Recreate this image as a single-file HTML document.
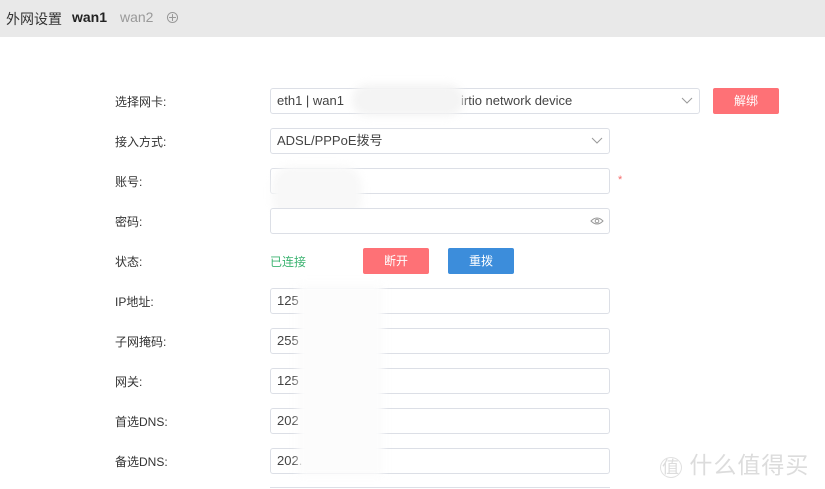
<!DOCTYPE html>
<html style="width:825px;height:489px;overflow:hidden"><head><meta charset="utf-8"><style>
*{margin:0;padding:0;box-sizing:border-box}
body{width:825px;height:489px;overflow:hidden;background:#fff;font-family:"Liberation Sans","Noto Sans CJK SC",sans-serif;font-size:13px;color:#333;position:relative}
.hdr{position:absolute;left:0;top:0;width:825px;height:37px;background:#e9e9e9}
.hdr span{position:absolute;top:9px;font-size:14px}
.lbl{position:absolute;left:115px;font-size:12px;color:#333}
.in{position:absolute;left:270px;width:340px;height:26px;border:1px solid #dcdfe6;border-radius:3px;background:#fff;padding-left:6px;line-height:24px;font-size:13px;color:#444}
.chev{position:absolute;right:6px;top:6px;width:12px;height:10px}
.btn{position:absolute;height:26px;color:#fff;font-size:12px;text-align:center;line-height:26px;border-radius:2px}
.blur{position:absolute;background:#fff;filter:blur(4px)}
</style></head><body>
<div class="hdr">
<span style="left:6px;color:#333">外网设置</span>
<span style="left:72px;font-weight:bold;color:#222">wan1</span>
<span style="left:120px;color:#999">wan2</span>
<span style="left:165px;color:#999;font-size:15px;top:7px">⊕</span>
</div>

<div class="lbl" style="top:93px">选择网卡:</div>
<div class="in" style="top:88px;width:430px">eth1 | wan1<span style="position:absolute;left:190px">irtio network device</span>
<svg class="chev" viewBox="0 0 12 10"><path d="M1 3l5 5 5-5" fill="none" stroke="#999" stroke-width="1"/></svg></div>
<div class="blur" style="left:352px;top:84px;width:112px;height:32px;border-radius:16px;background:#f4f4f4"></div>
<div class="btn" style="left:713px;top:88px;width:66px;background:#fe7176">解绑</div>

<div class="lbl" style="top:133px">接入方式:</div>
<div class="in" style="top:128px">ADSL/PPPoE拨号<svg class="chev" viewBox="0 0 12 10"><path d="M1 3l5 5 5-5" fill="none" stroke="#999" stroke-width="1"/></svg></div>

<div class="lbl" style="top:173px">账号:</div>
<div class="in" style="top:168px"></div>
<div style="position:absolute;left:618px;top:174px;color:#f56c6c;font-size:11px">*</div>
<div class="blur" style="left:272px;top:166px;width:90px;height:54px;border-radius:20px;background:#f8f8f8"></div>

<div class="lbl" style="top:213px">密码:</div>
<div class="in" style="top:208px"><svg style="position:absolute;right:5px;top:7px" width="14" height="10" viewBox="0 0 14 10"><path d="M1 5Q7-1 13 5Q7 11 1 5Z" fill="none" stroke="#999"/><circle cx="7" cy="5" r="1.8" fill="none" stroke="#999"/></svg></div>

<div class="lbl" style="top:253px">状态:</div>
<div style="position:absolute;left:270px;top:253px;color:#3cb371;font-size:12px">已连接</div>
<div class="btn" style="left:363px;top:248px;width:66px;background:#fe7176">断开</div>
<div class="btn" style="left:448px;top:248px;width:66px;background:#3c8ddb">重拨</div>

<div class="lbl" style="top:293px">IP地址:</div>
<div class="in" style="top:288px">125</div>
<div class="lbl" style="top:333px">子网掩码:</div>
<div class="in" style="top:328px">255</div>
<div class="lbl" style="top:373px">网关:</div>
<div class="in" style="top:368px">125</div>
<div class="lbl" style="top:413px">首选DNS:</div>
<div class="in" style="top:408px">202</div>
<div class="lbl" style="top:453px">备选DNS:</div>
<div class="in" style="top:448px">202.</div>
<div style="position:absolute;left:270px;top:487px;width:340px;height:2px;border-top:1px solid #dcdfe6"></div>
<div class="blur" style="left:298px;top:284px;width:85px;height:192px;background:#fcfcfc"></div>

<div style="position:absolute;left:660px;top:446px;color:#dcdcdc;font-size:23px;letter-spacing:1px;white-space:nowrap"><span style="border:1px solid #e0e0e0;border-radius:50%;font-size:17px;padding:0 1px">值</span> 什么值得买</div>
</body></html>
